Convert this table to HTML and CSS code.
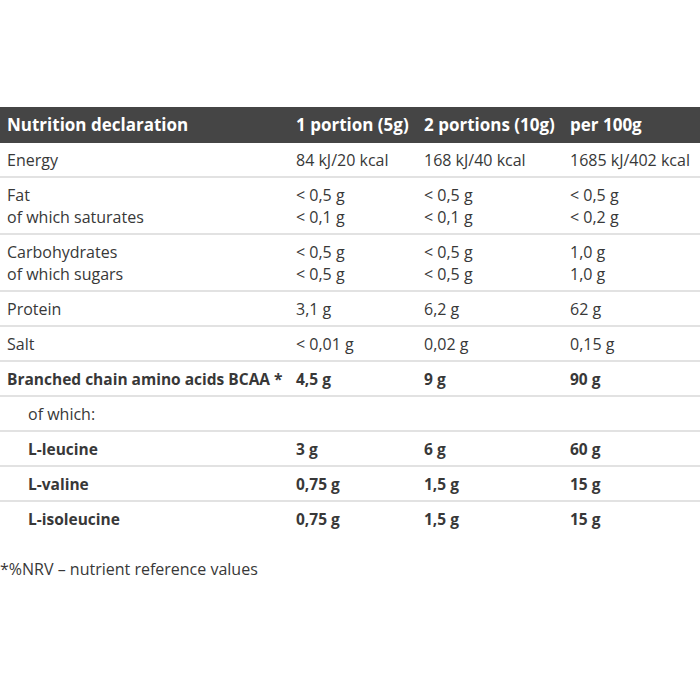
FILE: index.html
```html
<!DOCTYPE html>
<html>
<head>
<meta charset="utf-8">
<link rel="stylesheet" href="styles.css">
</head>
<body>
<div class="page">
  <div class="table">
    <div class="row head">
      <div>Nutrition declaration</div><div>1 portion (5g)</div><div>2 portions (10g)</div><div>per 100g</div>
    </div>
    <div class="row">
      <div>Energy</div><div>84 kJ/20 kcal</div><div>168 kJ/40 kcal</div><div>1685 kJ/402 kcal</div>
    </div>
    <div class="row">
      <div>Fat<br>of which saturates</div><div>&lt; 0,5 g<br>&lt; 0,1 g</div><div>&lt; 0,5 g<br>&lt; 0,1 g</div><div>&lt; 0,5 g<br>&lt; 0,2 g</div>
    </div>
    <div class="row">
      <div>Carbohydrates<br>of which sugars</div><div>&lt; 0,5 g<br>&lt; 0,5 g</div><div>&lt; 0,5 g<br>&lt; 0,5 g</div><div>1,0 g<br>1,0 g</div>
    </div>
    <div class="row">
      <div>Protein</div><div>3,1 g</div><div>6,2 g</div><div>62 g</div>
    </div>
    <div class="row">
      <div>Salt</div><div>&lt; 0,01 g</div><div>0,02 g</div><div>0,15 g</div>
    </div>
    <div class="row bold">
      <div>Branched chain amino acids BCAA *</div><div>4,5 g</div><div>9 g</div><div>90 g</div>
    </div>
    <div class="row">
      <div class="indent">of which:</div><div></div><div></div><div></div>
    </div>
    <div class="row bold">
      <div class="indent">L-leucine</div><div>3 g</div><div>6 g</div><div>60 g</div>
    </div>
    <div class="row bold">
      <div class="indent">L-valine</div><div>0,75 g</div><div>1,5 g</div><div>15 g</div>
    </div>
    <div class="row bold last">
      <div class="indent">L-isoleucine</div><div>0,75 g</div><div>1,5 g</div><div>15 g</div>
    </div>
  </div>
  <p class="note">*%NRV – nutrient reference values</p>
</div>
</body>
</html>
```

FILE: styles.css
```css
html, body {
  margin: 0;
  padding: 0;
  background: #fff;
}
body {
  font-family: "Open Sans", Lato, sans-serif;
  font-size: 16px;
  color: #383838;
}
.page {
  padding-top: 107px;
}
.table {
  display: flex;
  flex-direction: column;
}
.row {
  display: grid;
  grid-template-columns: 289px 128px 146px 1fr;
  padding-left: 7px;
  padding-top: 6px;
  padding-bottom: 5px;
  line-height: 22px;
  border-bottom: 2px solid #e2e2e2;
  white-space: nowrap;
}
.row.head {
  background: #454545;
  color: #fff;
  font-weight: 700;
  font-size: 17px;
  border-bottom: 0;
  padding-top: 7px;
  padding-bottom: 7px;
}
.row.bold {
  font-weight: 700;
  font-size: 15.5px;
}
.row.last {
  border-bottom: 0;
}
.indent {
  padding-left: 21px;
}
.note {
  margin: 23px 0 0 0;
  line-height: 22px;
  font-size: 16px;
}
```
